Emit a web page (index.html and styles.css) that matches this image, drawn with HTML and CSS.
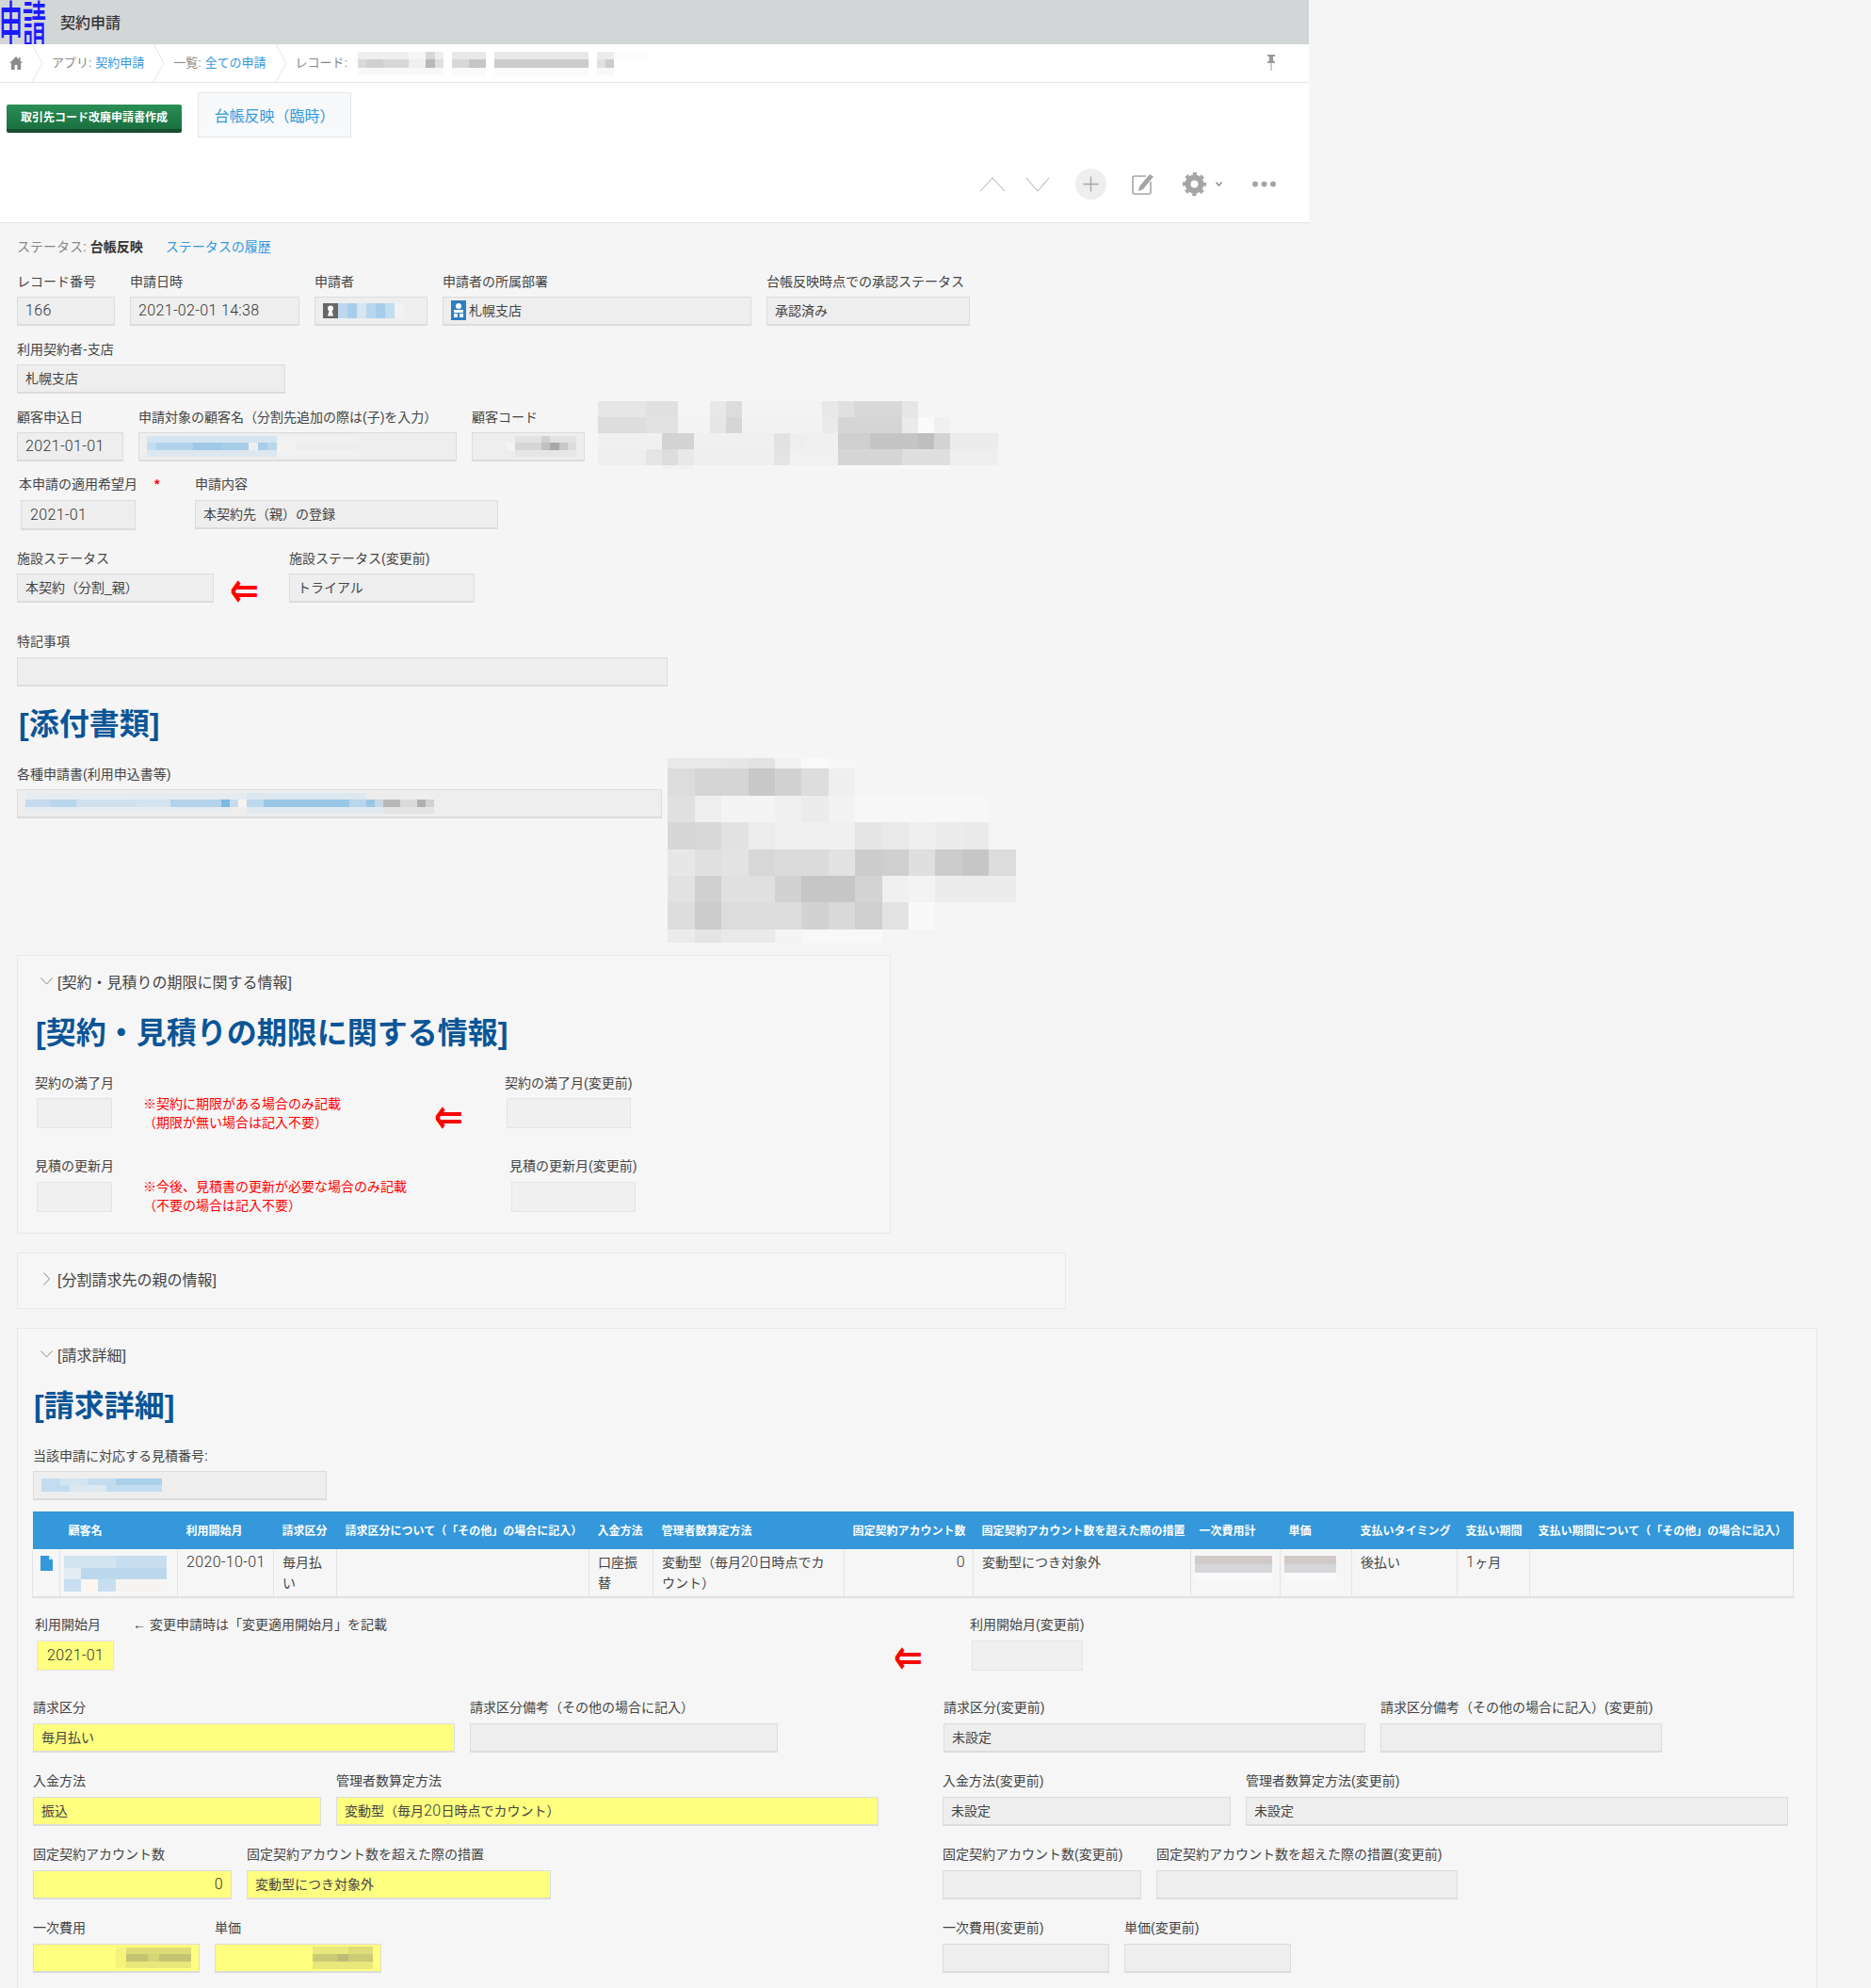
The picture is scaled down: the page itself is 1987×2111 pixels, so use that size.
FILE: index.html
```html
<!DOCTYPE html>
<html lang="ja">
<head>
  <meta charset="UTF-8">
  <title>契約申請</title>
  <link rel="stylesheet" href="styles.css">
</head>
<body>

  <div class="topArea">
    <div class="appHeader">
      <span class="appLogo">申請</span>
      <span class="appTitle">契約申請</span>
    </div>

    <div class="breadcrumb">
      <svg class="homeIcon" width="14" height="14" viewBox="0 0 14 14"><path d="M7 0 0 7h2v7h3.6V9h2.8v5H12V7h2L11.5 4.5V1H10v2z" fill="#8a8a8a"/></svg>
      <svg class="crumbSep" width="11" height="40" viewBox="0 0 11 40"><path d="M0 0 11 20 0 40" fill="none" stroke="#e4e4e4"/></svg>
      <span class="crumb">アプリ: <a class="link">契約申請</a></span>
      <svg class="crumbSep" width="11" height="40" viewBox="0 0 11 40"><path d="M0 0 11 20 0 40" fill="none" stroke="#e4e4e4"/></svg>
      <span class="crumb">一覧: <a class="link">全ての申請</a></span>
      <svg class="crumbSep" width="11" height="40" viewBox="0 0 11 40"><path d="M0 0 11 20 0 40" fill="none" stroke="#e4e4e4"/></svg>
      <span class="crumb">レコード:</span>
      <svg class="crumbBlur" width="308" height="25" viewBox="0 0 34 3" preserveAspectRatio="none" shape-rendering="crispEdges">
        <rect x="0" y="0" width="6" height="1" fill="#efefef"/><rect x="6" y="0" width="2" height="1" fill="#f6f6f6"/><rect x="8" y="0" width="1" height="1" fill="#d8d8d8"/><rect x="9" y="0" width="1" height="1" fill="#efefef"/>
        <rect x="11" y="0" width="4" height="1" fill="#e8e8e8"/><rect x="16" y="0" width="11" height="1" fill="#e8e8e8"/><rect x="28" y="0" width="2" height="1" fill="#ececec"/><rect x="30" y="0" width="4" height="1" fill="#fbfbfb"/>
        <rect x="0" y="1" width="1" height="1" fill="#dadada"/><rect x="1" y="1" width="2" height="1" fill="#d0d0d0"/><rect x="3" y="1" width="3" height="1" fill="#d8d8d8"/><rect x="6" y="1" width="2" height="1" fill="#efefef"/><rect x="8" y="1" width="1" height="1" fill="#b8b8b8"/><rect x="9" y="1" width="1" height="1" fill="#e0e0e0"/>
        <rect x="11" y="1" width="2" height="1" fill="#d8d8d8"/><rect x="13" y="1" width="2" height="1" fill="#c6c6c6"/><rect x="16" y="1" width="11" height="1" fill="#cccccc"/><rect x="28" y="1" width="1" height="1" fill="#e0e0e0"/><rect x="29" y="1" width="1" height="1" fill="#cccccc"/>
        <rect x="0" y="2" width="10" height="1" fill="#f8f8f8"/><rect x="11" y="2" width="4" height="1" fill="#fafafa"/><rect x="16" y="2" width="11" height="1" fill="#fafafa"/><rect x="28" y="2" width="2" height="1" fill="#f8f8f8"/>
      </svg>
      <svg class="pinIcon" width="10" height="17" viewBox="0 0 10 17"><path d="M1 0h8v2H7v4l2 2v1H5.5v8h-1V9H1V8l2-2V2H1z" fill="#999"/></svg>
    </div>

    <div class="actionArea">
      <div class="customButtons">
        <div class="greenButton">取引先コード改廃申請書作成</div>
        <div class="tabButton">台帳反映（臨時）</div>
      </div>
      <div class="toolIcons">
        <svg class="toolUp" width="26" height="14" viewBox="0 0 26 14"><path d="M0 14 13 0l13 14" fill="none" stroke="#aaa"/></svg>
        <svg class="toolDown" width="24" height="14" viewBox="0 0 24 14"><path d="M0 0l12 14L24 0" fill="none" stroke="#aaa"/></svg>
        <svg class="toolAdd" width="33" height="33" viewBox="0 0 33 33"><circle cx="16.5" cy="16.5" r="16.5" fill="#eee"/><path d="M16.5 8.5v16M8.5 16.5h16" stroke="#a5a5a5" stroke-width="1.4"/></svg>
        <svg class="toolEdit" width="24" height="23" viewBox="0 0 24 23"><path d="M15 3H3a2 2 0 0 0-2 2v15a2 2 0 0 0 2 2h15a2 2 0 0 0 2-2V9" fill="none" stroke="#a5a5a5" stroke-width="1.6"/><path d="M19 1l4 2.500L12 17l-5 2 1-5z" fill="#a5a5a5"/></svg>
        <svg class="toolGear" width="25" height="25" viewBox="0 0 25 25"><circle cx="12.500" cy="12.500" r="7" fill="none" stroke="#a5a5a5" stroke-width="6"/><circle cx="12.500" cy="12.500" r="11" fill="none" stroke="#a5a5a5" stroke-width="3" stroke-dasharray="4.320 4.320" stroke-dashoffset="2.160"/></svg>
        <svg class="toolCaret" width="7" height="5" viewBox="0 0 7 5"><path d="M.5.5l3 3.500 3-3.500" fill="none" stroke="#888" stroke-width="1.3"/></svg>
        <svg class="toolMore" width="25" height="7" viewBox="0 0 25 7"><circle cx="3" cy="3.500" r="3" fill="#a5a5a5"/><circle cx="12.500" cy="3.500" r="3" fill="#a5a5a5"/><circle cx="22" cy="3.500" r="3" fill="#a5a5a5"/></svg>
      </div>
    </div>
  </div>

  <div class="content">
    <div class="statusLine">
      <span class="statusKey">ステータス:</span> <b class="statusValue">台帳反映</b>
      <a class="link statusLink">ステータスの履歴</a>
    </div>

    <div class="row rowFirst">
      <div><div class="fldLabel">レコード番号</div><div class="field w104"><span class="num">166</span></div></div>
      <div><div class="fldLabel">申請日時</div><div class="field w180"><span class="num">2021-02-01 14:38</span></div></div>
      <div>
        <div class="fldLabel">申請者</div>
        <div class="field w120">
          <svg class="entityIcon" width="16" height="16" viewBox="0 0 16 16"><rect width="16" height="16" fill="#666"/><circle cx="8" cy="5.500" r="3" fill="#fff"/><path d="M5 13.500 6.500 8h3L11 13.500z" fill="#fff"/></svg>
          <svg class="noGap" width="70" height="16" viewBox="0 0 7 1" preserveAspectRatio="none" shape-rendering="crispEdges"><rect x="0" y="0" width="1" height="1" fill="#bdd8ee"/><rect x="1" y="0" width="1" height="1" fill="#a8cdea"/><rect x="2" y="0" width="1" height="1" fill="#d5e5f1"/><rect x="3" y="0" width="1" height="1" fill="#b8d6ee"/><rect x="4" y="0" width="1" height="1" fill="#a8cdea"/><rect x="5" y="0" width="1" height="1" fill="#c2dcf0"/><rect x="6" y="0" width="1" height="1" fill="#f0f2f4"/></svg>
        </div>
      </div>
      <div>
        <div class="fldLabel">申請者の所属部署</div>
        <div class="field w328">
          <svg class="entityIcon" width="16" height="21" viewBox="0 0 16 21"><rect width="16" height="21" fill="#2e7fc0"/><circle cx="8" cy="6" r="3" fill="#fff"/><rect x="3" y="10" width="10" height="3" fill="#fff"/><rect x="3" y="14" width="4" height="4" fill="#fff"/><rect x="9" y="14" width="4" height="4" fill="#fff"/></svg>
          <span class="orgName">札幌支店</span>
        </div>
      </div>
      <div><div class="fldLabel">台帳反映時点での承認ステータス</div><div class="field w216"><span>承認済み</span></div></div>
    </div>

    <div class="row rowNext">
      <div><div class="fldLabel">利用契約者-支店</div><div class="field w285"><span>札幌支店</span></div></div>
    </div>

    <div class="row rowNext hasMosaic">
      <div><div class="fldLabel">顧客申込日</div><div class="field w113"><span class="num">2021-01-01</span></div></div>
      <div>
        <div class="fldLabel">申請対象の顧客名（分割先追加の際は(子)を入力）</div>
        <div class="field w338">
          <svg width="226" height="22" viewBox="0 0 23 3" preserveAspectRatio="none" shape-rendering="crispEdges">
            <rect x="0" y="0" width="12" height="1" fill="#d4e4f0"/><rect x="12" y="0" width="2" height="1" fill="#d4e4f0"/><rect x="14" y="0" width="9" height="1" fill="#f0f1f2"/>
            <rect x="0" y="1" width="1" height="1" fill="#c4dcef"/><rect x="1" y="1" width="4" height="1" fill="#b0d2ea"/><rect x="5" y="1" width="3" height="1" fill="#9fc9e7"/><rect x="8" y="1" width="3" height="1" fill="#a8cde9"/><rect x="12" y="1" width="1" height="1" fill="#a8cde9"/><rect x="13" y="1" width="1" height="1" fill="#b8d6ec"/><rect x="14" y="1" width="2" height="1" fill="#f4f1ee"/>
            <rect x="0" y="2" width="12" height="1" fill="#dde7ef"/><rect x="12" y="2" width="2" height="1" fill="#dde7ef"/><rect x="14" y="2" width="9" height="1" fill="#f0f1f2"/>
          </svg>
        </div>
      </div>
      <div>
        <div class="fldLabel">顧客コード</div>
        <div class="field w120 fieldEnd">
          <svg width="74" height="22" viewBox="0 0 8 3" preserveAspectRatio="none" shape-rendering="crispEdges">
            <rect x="1" y="0" width="7" height="1" fill="#e2e2e2"/><rect x="4" y="0" width="1" height="1" fill="#d0d0d0"/>
            <rect x="0" y="1" width="1" height="1" fill="#f4f4f4"/><rect x="1" y="1" width="3" height="1" fill="#d6d6d6"/><rect x="4" y="1" width="1" height="1" fill="#c0c0c0"/><rect x="5" y="1" width="1" height="1" fill="#a8a8a8"/><rect x="6" y="1" width="1" height="1" fill="#c8c8c8"/><rect x="7" y="1" width="1" height="1" fill="#dcdcdc"/>
            <rect x="1" y="2" width="7" height="1" fill="#e6e6e6"/>
          </svg>
        </div>
      </div>
      <svg class="mosaicCode" width="425" height="72" viewBox="0 0 25 4.200" shape-rendering="crispEdges">
        <rect x="0" y="0" width="3" height="1" fill="#e6e6e6"/><rect x="3" y="0" width="2" height="1" fill="#e0e0e0"/><rect x="7" y="0" width="1" height="1" fill="#e8e8e8"/><rect x="8" y="0" width="1" height="1" fill="#dcdcdc"/><rect x="9" y="0" width="5" height="1" fill="#f3f3f3"/><rect x="14" y="0" width="1" height="1" fill="#e8e8e8"/><rect x="15" y="0" width="1" height="1" fill="#e0e0e0"/><rect x="16" y="0" width="3" height="1" fill="#d8d8d8"/><rect x="19" y="0" width="1" height="1" fill="#e6e6e6"/>
        <rect x="0" y="1" width="3" height="1" fill="#dddddd"/><rect x="3" y="1" width="2" height="1" fill="#e2e2e2"/><rect x="5" y="1" width="2" height="1" fill="#f3f3f3"/><rect x="7" y="1" width="1" height="1" fill="#e6e6e6"/><rect x="8" y="1" width="1" height="1" fill="#d6d6d6"/><rect x="9" y="1" width="5" height="1" fill="#f2f2f2"/><rect x="14" y="1" width="1" height="1" fill="#eaeaea"/><rect x="15" y="1" width="4" height="1" fill="#d5d5d5"/><rect x="19" y="1" width="1" height="1" fill="#eaeaea"/><rect x="20" y="1" width="1" height="1" fill="#fafafa"/><rect x="21" y="1" width="1" height="1" fill="#f0f0f0"/>
        <rect x="0" y="2" width="4" height="1" fill="#f0f0f0"/><rect x="4" y="2" width="2" height="1" fill="#d3d3d3"/><rect x="6" y="2" width="5" height="1" fill="#f0f0f0"/><rect x="11" y="2" width="1" height="1" fill="#e2e2e2"/><rect x="12" y="2" width="1" height="1" fill="#eeeeee"/><rect x="13" y="2" width="2" height="1" fill="#f0f0f0"/><rect x="15" y="2" width="2" height="1" fill="#cfcfcf"/><rect x="17" y="2" width="3" height="1" fill="#c5c5c5"/><rect x="20" y="2" width="1" height="1" fill="#bfbfbf"/><rect x="21" y="2" width="1" height="1" fill="#d3d3d3"/><rect x="22" y="2" width="3" height="1" fill="#ececec"/>
        <rect x="0" y="3" width="3" height="1" fill="#eeeeee"/><rect x="3" y="3" width="1" height="1" fill="#e5e5e5"/><rect x="4" y="3" width="1" height="1" fill="#dddddd"/><rect x="5" y="3" width="1" height="1" fill="#e8e8e8"/><rect x="6" y="3" width="5" height="1" fill="#efefef"/><rect x="11" y="3" width="1" height="1" fill="#e4e4e4"/><rect x="12" y="3" width="3" height="1" fill="#f1f1f1"/><rect x="15" y="3" width="4" height="1" fill="#d5d5d5"/><rect x="19" y="3" width="3" height="1" fill="#dfdfdf"/><rect x="22" y="3" width="3" height="1" fill="#efefef"/>
        <rect x="4" y="4" width="2" height=".2" fill="#f0f0f0"/><rect x="15" y="4" width="7" height=".2" fill="#f8f8f8"/>
      </svg>
    </div>

    <div class="row rowHope">
      <div class="hopeCol">
        <div class="fldLabel hopeLabel">本申請の適用希望月<span class="required">*</span></div>
        <div class="field w122 hopeField"><span class="num">2021-01</span></div>
      </div>
      <div><div class="fldLabel hopeLabel">申請内容</div><div class="field w322"><span>本契約先（親）の登録</span></div></div>
    </div>

    <div class="row rowFacility">
      <div><div class="fldLabel">施設ステータス</div><div class="field w209"><span>本契約（分割_親）</span></div></div>
      <div class="arrowSlot"><span class="redArrow">⇐</span></div>
      <div><div class="fldLabel">施設ステータス(変更前)</div><div class="field w197"><span>トライアル</span></div></div>
    </div>

    <div class="row rowNote">
      <div><div class="fldLabel gapSix">特記事項</div><div class="field w691"></div></div>
    </div>

    <h2 class="bigHeading attachHeading">[添付書類]</h2>

    <div class="row hasMosaic">
      <div>
        <div class="fldLabel">各種申請書(利用申込書等)</div>
        <div class="field w685">
          <svg width="434" height="22" viewBox="0 0 48 3" preserveAspectRatio="none" shape-rendering="crispEdges">
            <rect x="0" y="0" width="12" height="1" fill="#e6ecf1"/><rect x="12" y="0" width="14" height="1" fill="#e4ebf1"/><rect x="26" y="0" width="14" height="1" fill="#dde7ef"/><rect x="40" y="0" width="4" height="1" fill="#ececec"/>
            <rect x="0" y="1" width="3" height="1" fill="#c6dcee"/><rect x="3" y="1" width="3" height="1" fill="#b8d6ec"/><rect x="6" y="1" width="7" height="1" fill="#cfe1ef"/><rect x="13" y="1" width="4" height="1" fill="#d3e3f0"/><rect x="17" y="1" width="6" height="1" fill="#b4d3ea"/><rect x="23" y="1" width="1" height="1" fill="#7cb9e3"/><rect x="24" y="1" width="1" height="1" fill="#c6dcee"/><rect x="25" y="1" width="1" height="1" fill="#f8f4ef"/><rect x="26" y="1" width="2" height="1" fill="#bcd8ee"/><rect x="28" y="1" width="10" height="1" fill="#9ac6e6"/><rect x="38" y="1" width="2" height="1" fill="#b8d6ec"/><rect x="40" y="1" width="1" height="1" fill="#9ac6e6"/><rect x="41" y="1" width="1" height="1" fill="#c8d8e4"/><rect x="42" y="1" width="2" height="1" fill="#b8b8b8"/><rect x="44" y="1" width="2" height="1" fill="#dadada"/><rect x="46" y="1" width="1" height="1" fill="#b0b0b0"/><rect x="47" y="1" width="1" height="1" fill="#d2d2d2"/>
            <rect x="0" y="2" width="24" height="1" fill="#e8edf1"/><rect x="26" y="2" width="16" height="1" fill="#e2eaf0"/><rect x="42" y="2" width="6" height="1" fill="#e4e4e4"/>
          </svg>
        </div>
      </div>
      <svg class="mosaicForm" width="370" height="196" viewBox="0 0 13 6.900" shape-rendering="crispEdges">
        <rect x="0" y="0" width="1" height=".4" fill="#e9e9e9"/><rect x="1" y="0" width="1" height=".4" fill="#e9e9e9"/><rect x="2" y="0" width="1" height=".4" fill="#e7e7e7"/><rect x="3" y="0" width="1" height=".4" fill="#e3e3e3"/><rect x="4" y="0" width="1" height=".4" fill="#f2f2f2"/><rect x="5" y="0" width="1" height=".4" fill="#f9f9f9"/><rect x="6" y="0" width="1" height=".4" fill="#f6f6f6"/>
        <g transform="translate(0 .4)">
          <rect x="0" y="0" width="1" height="1" fill="#dcdcdc"/><rect x="1" y="0" width="2" height="1" fill="#d5d5d5"/><rect x="3" y="0" width="1" height="1" fill="#c8c8c8"/><rect x="4" y="0" width="1" height="1" fill="#d2d2d2"/><rect x="5" y="0" width="1" height="1" fill="#dddddd"/><rect x="6" y="0" width="1" height="1" fill="#efefef"/>
          <rect x="0" y="1" width="1" height="1" fill="#e0e0e0"/><rect x="1" y="1" width="1" height="1" fill="#eeeeee"/><rect x="2" y="1" width="2" height="1" fill="#f4f4f4"/><rect x="4" y="1" width="1" height="1" fill="#f0f0f0"/><rect x="5" y="1" width="1" height="1" fill="#ececec"/><rect x="6" y="1" width="1" height="1" fill="#f2f2f2"/><rect x="7" y="1" width="5" height="1" fill="#f7f7f7"/>
          <rect x="0" y="2" width="1" height="1" fill="#d6d6d6"/><rect x="1" y="2" width="1" height="1" fill="#d8d8d8"/><rect x="2" y="2" width="1" height="1" fill="#e2e2e2"/><rect x="3" y="2" width="1" height="1" fill="#ededed"/><rect x="4" y="2" width="3" height="1" fill="#f0f0f0"/><rect x="7" y="2" width="1" height="1" fill="#e5e5e5"/><rect x="8" y="2" width="1" height="1" fill="#e9e9e9"/><rect x="9" y="2" width="1" height="1" fill="#eeeeee"/><rect x="10" y="2" width="1" height="1" fill="#ececec"/><rect x="11" y="2" width="1" height="1" fill="#eaeaea"/>
          <rect x="0" y="3" width="1" height="1" fill="#e7e7e7"/><rect x="1" y="3" width="1" height="1" fill="#e0e0e0"/><rect x="2" y="3" width="1" height="1" fill="#e3e3e3"/><rect x="3" y="3" width="1" height="1" fill="#d7d7d7"/><rect x="4" y="3" width="2" height="1" fill="#dbdbdb"/><rect x="6" y="3" width="1" height="1" fill="#e2e2e2"/><rect x="7" y="3" width="1" height="1" fill="#cdcdcd"/><rect x="8" y="3" width="1" height="1" fill="#cfcfcf"/><rect x="9" y="3" width="1" height="1" fill="#dfdfdf"/><rect x="10" y="3" width="1" height="1" fill="#cccccc"/><rect x="11" y="3" width="1" height="1" fill="#c6c6c6"/><rect x="12" y="3" width="1" height="1" fill="#dcdcdc"/>
          <rect x="0" y="4" width="1" height="1" fill="#e2e2e2"/><rect x="1" y="4" width="1" height="1" fill="#d0d0d0"/><rect x="2" y="4" width="2" height="1" fill="#e0e0e0"/><rect x="4" y="4" width="1" height="1" fill="#d2d2d2"/><rect x="5" y="4" width="2" height="1" fill="#c6c6c6"/><rect x="7" y="4" width="1" height="1" fill="#d3d3d3"/><rect x="8" y="4" width="1" height="1" fill="#f0f0f0"/><rect x="9" y="4" width="1" height="1" fill="#f3f3f3"/><rect x="10" y="4" width="3" height="1" fill="#ececec"/>
          <rect x="0" y="5" width="1" height="1" fill="#dddddd"/><rect x="1" y="5" width="1" height="1" fill="#cccccc"/><rect x="2" y="5" width="3" height="1" fill="#dcdcdc"/><rect x="5" y="5" width="1" height="1" fill="#d2d2d2"/><rect x="6" y="5" width="1" height="1" fill="#d9d9d9"/><rect x="7" y="5" width="1" height="1" fill="#cfcfcf"/><rect x="8" y="5" width="1" height="1" fill="#e3e3e3"/><rect x="9" y="5" width="1" height="1" fill="#f9f9f9"/>
          <rect x="0" y="6" width="1" height=".5" fill="#ebebeb"/><rect x="1" y="6" width="1" height=".5" fill="#e4e4e4"/><rect x="2" y="6" width="2" height=".5" fill="#e9e9e9"/><rect x="4" y="6" width="1" height=".5" fill="#f4f4f4"/><rect x="5" y="6" width="3" height=".5" fill="#f8f8f8"/>
        </g>
      </svg>
    </div>

    <div class="section sectionTerm">
      <div class="sectionToggle">
        <svg width="13" height="8" viewBox="0 0 13 8"><path d="M.5.500l6 6.500 6-6.500" fill="none" stroke="#888"/></svg>
        <span>[契約・見積りの期限に関する情報]</span>
      </div>
      <h2 class="bigHeading inSection">[契約・見積りの期限に関する情報]</h2>

      <div class="termRow termFirst">
        <div class="termCol">
          <div class="fldLabel">契約の満了月</div>
          <div class="field w80 flat termField"></div>
        </div>
        <div class="redNote">※契約に期限がある場合のみ記載<br>（期限が無い場合は記入不要）</div>
        <div class="termArrow"><span class="redArrow">⇐</span></div>
        <div>
          <div class="fldLabel">契約の満了月(変更前)</div>
          <div class="field w132 flat termField"></div>
        </div>
      </div>

      <div class="termRow termSecond">
        <div class="termCol">
          <div class="fldLabel gapSix">見積の更新月</div>
          <div class="field w80 flat termField"></div>
        </div>
        <div class="redNote">※今後、見積書の更新が必要な場合のみ記載<br>（不要の場合は記入不要）</div>
        <div class="termArrow wider"></div>
        <div>
          <div class="fldLabel gapSix">見積の更新月(変更前)</div>
          <div class="field w132 flat termField"></div>
        </div>
      </div>
    </div>

    <div class="section sectionParent">
      <div class="sectionToggle">
        <svg width="13" height="14" viewBox="0 0 13 14"><path d="M3.500.500l6 6.500-6 6.500" fill="none" stroke="#888"/></svg>
        <span>[分割請求先の親の情報]</span>
      </div>
    </div>

    <div class="section sectionBilling">
      <div class="sectionToggle">
        <svg width="13" height="8" viewBox="0 0 13 8"><path d="M.5.500l6 6.500 6-6.500" fill="none" stroke="#888"/></svg>
        <span>[請求詳細]</span>
      </div>
      <h2 class="bigHeading inSection">[請求詳細]</h2>

      <div class="quoteField">
        <div class="fldLabel">当該申請に対応する見積番号:</div>
        <div class="field w312">
          <svg width="128" height="14" viewBox="0 0 13 2" preserveAspectRatio="none" shape-rendering="crispEdges"><rect x="0" y="0" width="13" height="2" fill="#c4dcef"/><rect x="2" y="0" width="3" height="1" fill="#d4e5f2"/><rect x="3" y="1" width="4" height="1" fill="#dbe8f2"/><rect x="8" y="0" width="5" height="1" fill="#abd0ea"/></svg>
        </div>
      </div>

      <table class="detailTable">
        <colgroup>
          <col class="c29"><col class="c125"><col class="c102"><col class="c67"><col class="c268"><col class="c68"><col class="c203"><col class="c137"><col class="c231"><col class="c95"><col class="c76"><col class="c112"><col class="c77"><col class="c280">
        </colgroup>
        <thead>
          <tr>
            <th></th><th>顧客名</th><th>利用開始月</th><th>請求区分</th><th>請求区分について（「その他」の場合に記入）</th><th>入金方法</th><th>管理者数算定方法</th><th>固定契約アカウント数</th><th>固定契約アカウント数を超えた際の措置</th><th>一次費用計</th><th>単価</th><th>支払いタイミング</th><th>支払い期間</th><th>支払い期間について（「その他」の場合に記入）</th>
          </tr>
        </thead>
        <tbody>
          <tr>
            <td class="iconCell"><svg width="13" height="16" viewBox="0 0 13 16"><path d="M0 0h9l4 4v12H0z" fill="#3498db"/><path d="M9 0v4h4z" fill="#cfe5f5"/></svg></td>
            <td class="blurCell">
              <svg class="cellBlur" width="109" height="38" viewBox="0 0 6 3" preserveAspectRatio="none" shape-rendering="crispEdges">
                <rect x="0" y="0" width="3" height="1" fill="#d3e4f1"/><rect x="3" y="0" width="3" height="1" fill="#c6def0"/>
                <rect x="1" y="1" width="5" height="1" fill="#bcd8ed"/><rect x="0" y="1" width="1" height="1" fill="#e2ecf3"/>
                <rect x="0" y="2" width="1" height="1" fill="#c6def0"/><rect x="1" y="2" width="1" height="1" fill="#fbf6f2"/><rect x="2" y="2" width="1" height="1" fill="#c6def0"/><rect x="3" y="2" width="3" height="1" fill="#f6f4f2"/>
              </svg>
            </td>
            <td><span class="num">2020-10-01</span></td>
            <td>毎月払<br>い</td>
            <td></td>
            <td>口座振<br>替</td>
            <td>変動型（毎月<span class="num">20</span>日時点でカ<br>ウント）</td>
            <td class="alignRight"><span class="num">0</span></td>
            <td>変動型につき対象外</td>
            <td class="blurCell">
              <svg class="cellBlur" width="82" height="27" viewBox="0 0 4 3" preserveAspectRatio="none" shape-rendering="crispEdges"><rect x="0" y="0" width="4" height="1" fill="#d1cac6"/><rect x="0" y="1" width="4" height="1" fill="#d4d6d9"/><rect x="0" y="2" width="4" height="1" fill="#f9f9f9"/></svg>
            </td>
            <td class="blurCell">
              <svg class="cellBlur" width="55" height="27" viewBox="0 0 4 3" preserveAspectRatio="none" shape-rendering="crispEdges"><rect x="0" y="0" width="4" height="1" fill="#d1cac6"/><rect x="0" y="1" width="4" height="1" fill="#d4d6d9"/><rect x="0" y="2" width="4" height="1" fill="#f9f9f9"/></svg>
            </td>
            <td>後払い</td>
            <td><span class="num">1</span>ヶ月</td>
            <td></td>
          </tr>
        </tbody>
      </table>

      <div class="startRow">
        <div class="startCol">
          <div class="fldLabel gapSix">利用開始月<span class="startHint">← 変更申請時は「変更適用開始月」を記載</span></div>
          <div class="field w82 yellow flat termField startField"><span class="num">2021-01</span></div>
        </div>
        <div class="startArrow"><span class="redArrow">⇐</span></div>
        <div>
          <div class="fldLabel gapSix">利用開始月(変更前)</div>
          <div class="field w118 flat termField"></div>
        </div>
      </div>

      <div class="compare">
        <div class="row">
          <div><div class="fldLabel gapSix">請求区分</div><div class="field w448 yellow"><span>毎月払い</span></div></div>
          <div><div class="fldLabel gapSix">請求区分備考（その他の場合に記入）</div><div class="field w327"></div></div>
        </div>
        <div class="row shiftOne">
          <div><div class="fldLabel gapSix">請求区分(変更前)</div><div class="field w448"><span>未設定</span></div></div>
          <div><div class="fldLabel gapSix">請求区分備考（その他の場合に記入）(変更前)</div><div class="field w299"></div></div>
        </div>
        <div class="row">
          <div><div class="fldLabel gapSix">入金方法</div><div class="field w306 yellow"><span>振込</span></div></div>
          <div><div class="fldLabel gapSix">管理者数算定方法</div><div class="field w576 yellow"><span>変動型（毎月<span class="num">20</span>日時点でカウント）</span></div></div>
        </div>
        <div class="row">
          <div><div class="fldLabel gapSix">入金方法(変更前)</div><div class="field w306"><span>未設定</span></div></div>
          <div><div class="fldLabel gapSix">管理者数算定方法(変更前)</div><div class="field w576"><span>未設定</span></div></div>
        </div>
        <div class="row">
          <div><div class="fldLabel gapSix">固定契約アカウント数</div><div class="field w211 yellow fieldEnd"><span class="num">0</span></div></div>
          <div><div class="fldLabel gapSix">固定契約アカウント数を超えた際の措置</div><div class="field w323 yellow"><span>変動型につき対象外</span></div></div>
        </div>
        <div class="row">
          <div><div class="fldLabel gapSix">固定契約アカウント数(変更前)</div><div class="field w211"></div></div>
          <div><div class="fldLabel gapSix">固定契約アカウント数を超えた際の措置(変更前)</div><div class="field w320"></div></div>
        </div>
        <div class="row">
          <div>
            <div class="fldLabel gapSix">一次費用</div>
            <div class="field w177 yellow fieldEnd">
              <svg width="80" height="22" viewBox="0 0 7 3" preserveAspectRatio="none" shape-rendering="crispEdges"><rect x="0" y="0" width="7" height="3" fill="#f4f47a"/><rect x="1" y="0" width="6" height="1" fill="#dcdc78"/><rect x="1" y="1" width="6" height="1" fill="#c4c470"/><rect x="3" y="1" width="1" height="1" fill="#d6d678"/><rect x="1" y="2" width="6" height="1" fill="#e8e87a"/></svg>
            </div>
          </div>
          <div>
            <div class="fldLabel gapSix">単価</div>
            <div class="field w177 yellow fieldEnd">
              <svg width="64" height="24" viewBox="0 0 5 3" preserveAspectRatio="none" shape-rendering="crispEdges"><rect x="0" y="0" width="5" height="3" fill="#e8e87c"/><rect x="0" y="1" width="5" height="1" fill="#cbcb76"/><rect x="2" y="1" width="1" height="1" fill="#bcbc76"/><rect x="3" y="0" width="2" height="1" fill="#dcdc78"/></svg>
            </div>
          </div>
        </div>
        <div class="row">
          <div><div class="fldLabel gapSix">一次費用(変更前)</div><div class="field w177"></div></div>
          <div><div class="fldLabel gapSix">単価(変更前)</div><div class="field w177"></div></div>
        </div>
      </div>
    </div>
  </div>

</body>
</html>
```
FILE: styles.css
```css
html,
body {
  margin: 0;
  height: 2111px;
  overflow: hidden;
}
body {
  background-color: #f5f5f5;
  color: #444;
  font-family: "Liberation Sans", "Noto Sans CJK JP", sans-serif;
  font-size: 14px;
  text-spacing-trim: space-all;
}
.link {
  color: #3498db;
}
.num {
  color: #333;
  font-family: Roboto, "Liberation Sans", sans-serif;
  font-size: 16px;
  font-weight: 300;
  letter-spacing: .35px;
  white-space: nowrap;
}

/* top */
.topArea {
  width: 1390px;
  background-color: #fff;
}
.appHeader {
  display: flex;
  align-items: center;
  height: 47px;
  background-color: #d3d6d7;
  overflow: hidden;
}
.appLogo {
  width: 50px;
  margin-left: -1px;
  color: #1a1aff;
  font-family: "Noto Sans CJK JP", sans-serif;
  font-size: 25px;
  font-weight: 500;
  line-height: 47px;
  white-space: nowrap;
  transform: scaleY(2.2);
}
.appTitle {
  margin: -2px 0 0 15px;
  color: #333;
  font-size: 16px;
  font-weight: 500;
}
.breadcrumb {
  display: flex;
  align-items: center;
  gap: 10px;
  height: 40px;
  padding: 0 35px 0 10px;
  border-bottom: 1px solid #e4e4e4;
  color: #888;
  font-size: 13px;
}
.homeIcon {
  margin-top: -1px;
}
.crumb {
  min-width: 98px;
  margin-top: -3px;
  white-space: nowrap;
}
.crumbBlur {
  margin-left: -42px;
}
.pinIcon {
  margin-left: auto;
  margin-top: -2px;
}
.actionArea {
  height: 148px;
  border-bottom: 1px solid #e4e4e4;
}
.customButtons {
  display: flex;
  align-items: flex-start;
  gap: 17px;
  padding: 10px 0 0 7px;
}
.greenButton {
  display: flex;
  align-items: center;
  justify-content: center;
  box-sizing: border-box;
  width: 186px;
  height: 30px;
  margin-top: 13px;
  padding-bottom: 2px;
  border-bottom: 4px solid #174d30;
  border-radius: 2px;
  background: linear-gradient(#2a8f55, #1a703f);
  color: #fff;
  font-size: 12px;
  font-weight: bold;
}
.tabButton {
  display: flex;
  align-items: center;
  justify-content: center;
  box-sizing: border-box;
  width: 163px;
  height: 48px;
  border: 1px solid #e3e7e8;
  background-color: #f7f9fa;
  color: #3498db;
  font-size: 16px;
}
.toolIcons {
  display: flex;
  align-items: center;
  justify-content: flex-end;
  height: 33px;
  margin-top: 33px;
  padding-right: 35px;
}
.toolDown {
  margin-left: 23px;
}
.toolAdd {
  margin-left: 28px;
}
.toolEdit {
  margin-left: 27px;
}
.toolGear {
  margin-left: 30px;
}
.toolCaret {
  margin-left: 10px;
}
.toolMore {
  margin-left: 32px;
}

/* form */
.content {
  padding-left: 18px;
}
.statusLine {
  height: 20px;
  margin-top: 16px;
  line-height: 18px;
}
.statusKey {
  color: #888;
}
.statusValue {
  color: #333;
}
.statusLink {
  margin-left: 20px;
}
.row {
  position: relative;
  display: flex;
  gap: 16px;
}
.rowFirst {
  margin-top: 17px;
}
.rowNext {
  margin-top: 16px;
}
.rowHope {
  margin-top: 15px;
}
.rowFacility {
  margin-top: 21px;
}
.rowNote {
  margin-top: 32px;
}
.fldLabel {
  height: 20px;
  margin-bottom: 5px;
  line-height: 18px;
  white-space: nowrap;
}
.gapSix {
  margin-bottom: 6px;
}
.field {
  display: flex;
  align-items: center;
  gap: 2px;
  box-sizing: border-box;
  height: 31px;
  padding: 0 8px 3px;
  border: 1px solid #dcdcdc;
  border-bottom-width: 2px;
  background-color: #eee;
  white-space: nowrap;
}
.field > .num,
.field > svg {
  margin-top: 2px;
}
.fieldEnd {
  justify-content: flex-end;
}
.noGap {
  margin-left: -2px;
}
.orgName {
  margin-left: 1px;
}
.flat {
  border-bottom-width: 1px;
  border-color: #e4e4e4;
}
.yellow {
  background-color: #ffff80;
}
.entityIcon {
  flex: none;
}
.w80 { width: 80px; }
.w82 { width: 82px; }
.w104 { width: 104px; }
.w113 { width: 113px; }
.w118 { width: 118px; }
.w120 { width: 120px; }
.w122 { width: 122px; }
.w132 { width: 132px; }
.w177 { width: 177px; }
.w180 { width: 180px; }
.w197 { width: 197px; }
.w209 { width: 209px; }
.w211 { width: 211px; }
.w216 { width: 216px; }
.w285 { width: 285px; }
.w299 { width: 299px; }
.w306 { width: 306px; }
.w312 { width: 312px; }
.w320 { width: 320px; }
.w322 { width: 322px; }
.w323 { width: 323px; }
.w327 { width: 327px; }
.w328 { width: 328px; }
.w338 { width: 338px; }
.w448 { width: 448px; }
.w576 { width: 576px; }
.w685 { width: 685px; }
.w691 { width: 691px; }
.mosaicCode {
  position: absolute;
  left: 617px;
  top: -8px;
}
.mosaicForm {
  position: absolute;
  left: 691px;
  top: -8px;
}
.hopeCol {
  width: 124px;
  margin-left: 2px;
  margin-right: 47px;
}
.hopeLabel {
  height: 21px;
}
.hopeField {
  height: 32px;
  margin-left: 2px;
  padding-left: 9px;
}
.required {
  margin-left: 18px;
  color: #f00;
  font-weight: bold;
}
.arrowSlot {
  display: flex;
  align-items: flex-end;
  width: 48px;
  box-sizing: border-box;
}
.redArrow {
  display: inline-block;
  color: #f00;
  font-family: "DejaVu Sans", sans-serif;
  font-size: 37px;
  font-weight: bold;
  line-height: 30px;
  transform: translate(1px, 2px) scaleY(1.4);
}
.bigHeading {
  margin: 0;
  color: #0b5596;
  font-size: 32px;
  font-weight: bold;
  line-height: 40px;
}
.attachHeading {
  margin: 20px 0 24px 2px;
}

/* sections */
.section {
  box-sizing: border-box;
  border: 1px solid #e8e8e8;
  background-color: #f6f6f6;
}
.sectionTerm {
  width: 928px;
  height: 296px;
  margin-top: 145px;
  padding: 17px 0 0 18px;
}
.sectionParent {
  width: 1114px;
  height: 60px;
  margin-top: 20px;
  padding: 17px 0 0 18px;
}
.sectionBilling {
  width: 1912px;
  height: 720px;
  margin-top: 20px;
  padding: 17px 0 0 16px;
}
.sectionToggle {
  display: flex;
  align-items: center;
  gap: 5px;
  height: 20px;
  margin-left: 6px;
  font-size: 16px;
  white-space: nowrap;
}
.sectionBilling .sectionToggle {
  margin-left: 8px;
}
.inSection {
  margin-top: 25px;
  margin-left: 1px;
}
.termRow {
  display: flex;
}
.termFirst {
  margin-top: 24px;
}
.termSecond {
  margin-top: 27px;
}
.termCol {
  width: 115px;
}
.termField {
  height: 32px;
  margin-left: 2px;
  background-color: #f0f0f0;
}
.yellow.termField {
  background-color: #ffff80;
}
.startField {
  padding-left: 10px;
}
.redNote {
  box-sizing: border-box;
  width: 308px;
  padding-top: 21px;
  color: #f00;
  line-height: 20px;
  white-space: nowrap;
}
.termArrow {
  width: 76px;
  padding-top: 28px;
}
.termArrow.wider {
  width: 81px;
}
.quoteField {
  margin-top: 24px;
}

/* table */
.detailTable {
  width: 1870px;
  margin: 12px 0 0 -1px;
  border-collapse: collapse;
  table-layout: fixed;
}
.detailTable th {
  box-sizing: border-box;
  height: 40px;
  padding: 0 0 2px 9px;
  background-color: #3498db;
  color: #fff;
  font-size: 12px;
  font-weight: bold;
  text-align: left;
  white-space: nowrap;
  overflow: hidden;
}
.detailTable td {
  box-sizing: border-box;
  height: 51px;
  padding: 3px 0 1px 9px;
  border: 1px solid #e3e3e3;
  border-top: 0;
  border-bottom: 2px solid #e0e0e0;
  line-height: 22px;
  vertical-align: top;
  white-space: nowrap;
}
.detailTable .num {
  display: inline-block;
  line-height: 18px;
}
.detailTable .iconCell {
  padding: 7px 0 0 8px;
}
.detailTable .blurCell {
  padding: 7px 0 0 4px;
}
.detailTable .alignRight {
  padding-right: 8px;
  text-align: right;
}
.cellBlur {
  display: block;
}
.c29 { width: 29px; }
.c67 { width: 67px; }
.c68 { width: 68px; }
.c76 { width: 76px; }
.c77 { width: 77px; }
.c95 { width: 95px; }
.c102 { width: 102px; }
.c112 { width: 112px; }
.c125 { width: 125px; }
.c137 { width: 137px; }
.c203 { width: 203px; }
.c231 { width: 231px; }
.c268 { width: 268px; }
.c280 { width: 280px; }
.startRow {
  display: flex;
  margin-top: 19px;
}
.startCol {
  width: 911px;
  margin-left: 2px;
}
.startHint {
  margin-left: 34px;
}
.startArrow {
  width: 82px;
  padding-top: 27px;
}
.compare {
  display: grid;
  grid-template-columns: 966px 1fr;
  row-gap: 21px;
  margin-top: 30px;
}
.shiftOne {
  margin-left: 1px;
}
```
